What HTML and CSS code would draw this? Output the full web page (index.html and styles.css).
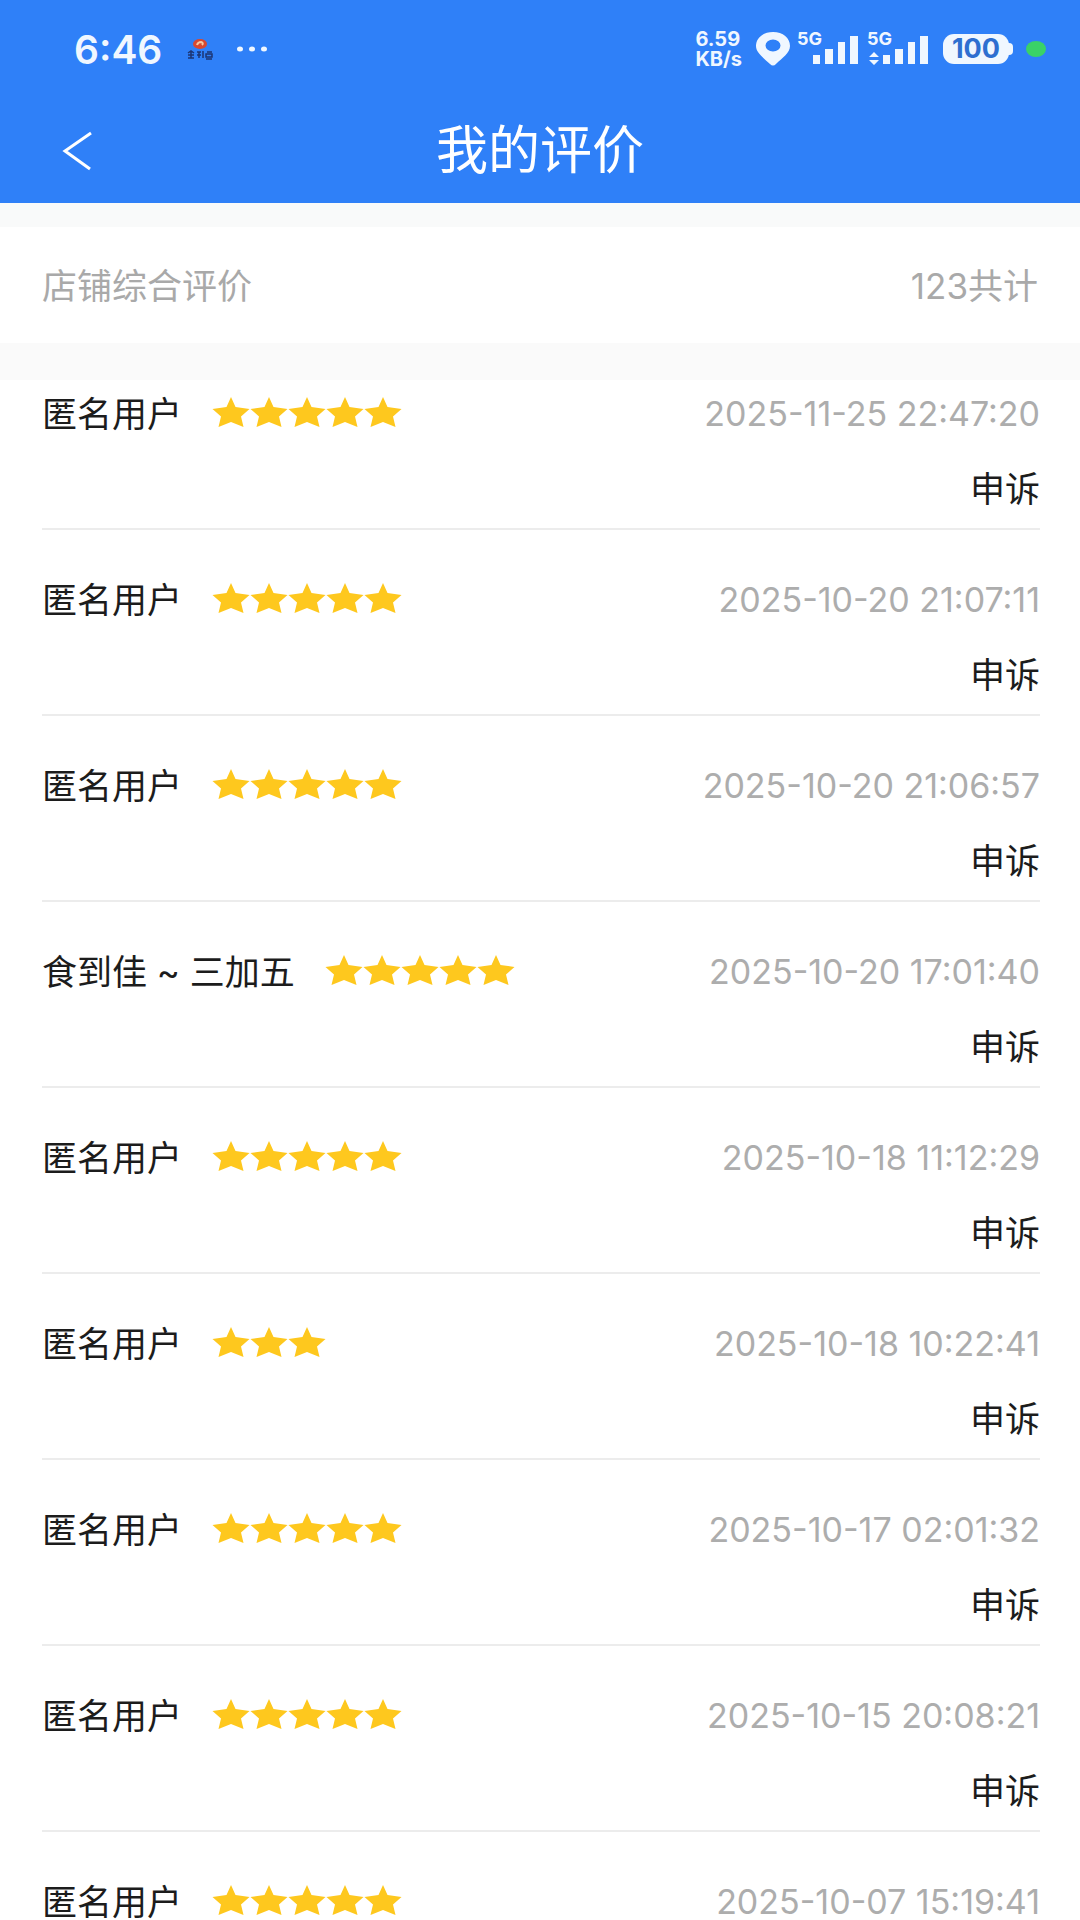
FILE: index.html
```html
<!DOCTYPE html>
<html lang="zh-CN">
<head>
    <meta charset="UTF-8">
    <meta name="viewport" content="width=device-width, initial-scale=1.0">
    <title>我的评价</title>
    <link rel="stylesheet" href="styles.css">
</head>
<body>
    <!-- 星星图标 -->
    <svg class="sprite" aria-hidden="true">
        <symbol id="star" viewBox="0 0 38 30">
            <path d="M19 0L23.5 10L37.5 12L29 19.5L31.5 30L19 25L6.5 30L9 19.5L.5 12L14.5 10Z"/>
        </symbol>
        <symbol id="stars-3" viewBox="0 0 114 30">
            <use href="#star" x="0" width="38" height="30"/>
            <use href="#star" x="38" width="38" height="30"/>
            <use href="#star" x="76" width="38" height="30"/>
        </symbol>
        <symbol id="stars-5" viewBox="0 0 190 30">
            <use href="#stars-3" x="0" width="114" height="30"/>
            <use href="#star" x="114" width="38" height="30"/>
            <use href="#star" x="152" width="38" height="30"/>
        </symbol>
    </svg>

    <div class="app">
        <header class="header">
            <!-- 状态栏 -->
            <div class="status-bar">
                <span class="clock">6:46</span>
                <svg class="app-icon" viewBox="0 0 28 22">
                    <ellipse cx="14" cy="6" rx="7" ry="5" fill="#d9482f"/>
                    <path d="M11 7q1-3 4-3 3 1 1 3" fill="none" stroke="#f6c9a0" stroke-width="2"/>
                    <path d="M2 15l3-2 3 2M2 17h6M5 14v6M2 20h6M11 14h4M11 17h4M13 14v6M17 13v7M21 14h5M20 16h6v3h-6zM20 21h6" fill="none" stroke="#1d3573" stroke-width="1.5"/>
                </svg>
                <svg class="more" viewBox="0 0 32 6">
                    <ellipse cx="4" cy="3" rx="3" ry="2.5"/>
                    <ellipse cx="16" cy="3" rx="3" ry="2.5"/>
                    <ellipse cx="28" cy="3" rx="3" ry="2.5"/>
                </svg>
                <div class="status-right">
                    <span class="speed">6.59<br>KB/s</span>
                    <svg class="pin" viewBox="0 0 34 34">
                        <path fill-rule="evenodd" d="M17 0C7 0 0 6 0 14c0 7 8 12 14 18q3 3 6 0C26 26 34 21 34 14 34 6 27 0 17 0zM17 7.500a7.500 6 0 1 1 0 12a7.500 6 0 1 1 0-12z"/>
                    </svg>
                    <div class="signal">
                        <span>5G</span>
                        <svg viewBox="0 0 62 34">
                            <path d="M16 23h7v9h-7zM28 17h8v15h-8zM41 10h7v22h-7zM53 4h8v28h-8z"/>
                        </svg>
                    </div>
                    <div class="signal">
                        <span>5G</span>
                        <svg viewBox="0 0 62 34">
                            <path d="M2 25l5-5 5 5zM2 28l5 5 5-5zM16 23h7v9h-7zM28 17h8v15h-8zM41 10h7v22h-7zM53 4h8v28h-8z"/>
                        </svg>
                    </div>
                    <span class="battery">100</span>
                    <span class="dot"></span>
                </div>
            </div>

            <!-- 标题栏 -->
            <div class="nav">
                <button class="back" type="button" aria-label="返回">
                    <svg viewBox="0 0 32 40"><path d="M29 2L3 20L28 38"/></svg>
                </button>
                <h1>我的评价</h1>
            </div>
        </header>

        <section class="summary">
            <span>店铺综合评价</span>
            <span>123共计</span>
        </section>

        <!-- 评价列表 -->
        <ul class="reviews">
            <li class="review">
                <div class="review-top">
                    <span class="name">匿名用户</span>
                    <svg class="stars" viewBox="0 0 190 30" role="img" aria-label="5星"><use href="#stars-5"/></svg>
                    <time>2025-11-25 22:47:20</time>
                </div>
                <button class="appeal" type="button">申诉</button>
            </li>
            <li class="review">
                <div class="review-top">
                    <span class="name">匿名用户</span>
                    <svg class="stars" viewBox="0 0 190 30" role="img" aria-label="5星"><use href="#stars-5"/></svg>
                    <time>2025-10-20 21:07:11</time>
                </div>
                <button class="appeal" type="button">申诉</button>
            </li>
            <li class="review">
                <div class="review-top">
                    <span class="name">匿名用户</span>
                    <svg class="stars" viewBox="0 0 190 30" role="img" aria-label="5星"><use href="#stars-5"/></svg>
                    <time>2025-10-20 21:06:57</time>
                </div>
                <button class="appeal" type="button">申诉</button>
            </li>
            <li class="review">
                <div class="review-top">
                    <span class="name">食到佳 ~ 三加五</span>
                    <svg class="stars" viewBox="0 0 190 30" role="img" aria-label="5星"><use href="#stars-5"/></svg>
                    <time>2025-10-20 17:01:40</time>
                </div>
                <button class="appeal" type="button">申诉</button>
            </li>
            <li class="review">
                <div class="review-top">
                    <span class="name">匿名用户</span>
                    <svg class="stars" viewBox="0 0 190 30" role="img" aria-label="5星"><use href="#stars-5"/></svg>
                    <time>2025-10-18 11:12:29</time>
                </div>
                <button class="appeal" type="button">申诉</button>
            </li>
            <li class="review">
                <div class="review-top">
                    <span class="name">匿名用户</span>
                    <svg class="stars stars-short" viewBox="0 0 114 30" role="img" aria-label="3星"><use href="#stars-3"/></svg>
                    <time>2025-10-18 10:22:41</time>
                </div>
                <button class="appeal" type="button">申诉</button>
            </li>
            <li class="review">
                <div class="review-top">
                    <span class="name">匿名用户</span>
                    <svg class="stars" viewBox="0 0 190 30" role="img" aria-label="5星"><use href="#stars-5"/></svg>
                    <time>2025-10-17 02:01:32</time>
                </div>
                <button class="appeal" type="button">申诉</button>
            </li>
            <li class="review">
                <div class="review-top">
                    <span class="name">匿名用户</span>
                    <svg class="stars" viewBox="0 0 190 30" role="img" aria-label="5星"><use href="#stars-5"/></svg>
                    <time>2025-10-15 20:08:21</time>
                </div>
                <button class="appeal" type="button">申诉</button>
            </li>
            <li class="review">
                <div class="review-top">
                    <span class="name">匿名用户</span>
                    <svg class="stars" viewBox="0 0 190 30" role="img" aria-label="5星"><use href="#stars-5"/></svg>
                    <time>2025-10-07 15:19:41</time>
                </div>
            </li>
        </ul>
    </div>
</body>
</html>
```
FILE: styles.css
```css
* {
    box-sizing: border-box;
}
body {
    margin: 0;
    font-family: Inter, "Noto Sans CJK SC", sans-serif;
    background-color: #fff;
    color: #1c1c1c;
}
button {
    padding: 0;
    border: none;
    background: none;
    font: inherit;
    color: inherit;
    cursor: pointer;
}
.sprite {
    display: none;
}
.app {
    display: flex;
    flex-direction: column;
    height: 100vh;
}

/* 顶部 */
.header {
    flex: none;
    background-color: #2f80f8;
    color: #fff;
}
.status-bar {
    display: flex;
    align-items: center;
    height: 98px;
    padding: 0 34px 0 74px;
    fill: #f0f7ff;
    color: #f0f7ff;
}
.clock {
    font-size: 39px;
    font-weight: 600;
}
.app-icon {
    width: 28px;
    height: 22px;
    margin-left: 24px;
}
.more {
    width: 32px;
    height: 6px;
    margin-left: 22px;
}
.status-right {
    display: flex;
    align-items: center;
    margin-left: auto;
}
.speed {
    font-size: 20px;
    font-weight: 700;
    line-height: 20px;
}
.pin {
    width: 34px;
    height: 34px;
    margin: 0 7px 0 14px;
}
.signal {
    position: relative;
    width: 62px;
    height: 34px;
    margin-right: 8px;
}
.signal svg {
    display: block;
}
.signal span {
    position: absolute;
    top: -3px;
    left: 0;
    font-size: 18px;
    font-weight: 700;
    line-height: 20px;
}
.battery {
    position: relative;
    width: 66px;
    height: 30px;
    margin: 0 17px 0 6px;
    border-radius: 11px;
    background-color: #f0f7ff;
    color: #2e6fd0;
    font-size: 27px;
    font-weight: 700;
    line-height: 30px;
    text-align: center;
}
.battery::after {
    content: "";
    position: absolute;
    top: 9px;
    right: -4px;
    width: 5px;
    height: 12px;
    border-radius: 0 4px 4px 0;
    background-color: #f0f7ff;
}
.dot {
    width: 20px;
    height: 16px;
    border-radius: 50%;
    background-color: #3ad267;
}
.nav {
    display: grid;
    grid-template-columns: 1fr auto 1fr;
    align-items: center;
    height: 105px;
    padding: 0 62px;
}
.nav h1 {
    margin: 0;
    font-size: 52px;
    font-weight: 400;
    line-height: 104px;
}
.back {
    justify-self: start;
    width: 32px;
    height: 40px;
}
.back svg {
    display: block;
    fill: none;
    stroke: #fff;
    stroke-width: 3;
}

/* 汇总 */
.summary {
    display: flex;
    flex: none;
    justify-content: space-between;
    align-items: center;
    height: 177px;
    padding: 0 42px 4px;
    border-top: 24px solid #f9fafa;
    border-bottom: 37px solid #fafafa;
    color: #a9a9a9;
    font-size: 35px;
}

/* 评价列表 */
.reviews {
    flex: 1;
    min-height: 0;
    margin: 0;
    padding: 0 40px 0 42px;
    overflow-y: auto;
    scrollbar-width: none;
    list-style: none;
}
.review {
    display: flex;
    flex-direction: column;
    gap: 27px;
    padding: 46px 0 15px;
    border-bottom: 2px solid #ececec;
}
.review:first-child {
    padding-top: 10px;
}
.review-top {
    display: flex;
    align-items: center;
    line-height: 48px;
}
.name {
    font-size: 35px;
}
.stars {
    width: 190px;
    height: 30px;
    margin: 0 0 4px 30px;
    fill: #fec81e;
}
.stars-short {
    width: 114px;
}
.review time {
    margin-left: auto;
    color: #adadad;
    font-size: 34px;
}
.appeal {
    align-self: flex-end;
    font-size: 35px;
    line-height: 48px;
}
```
